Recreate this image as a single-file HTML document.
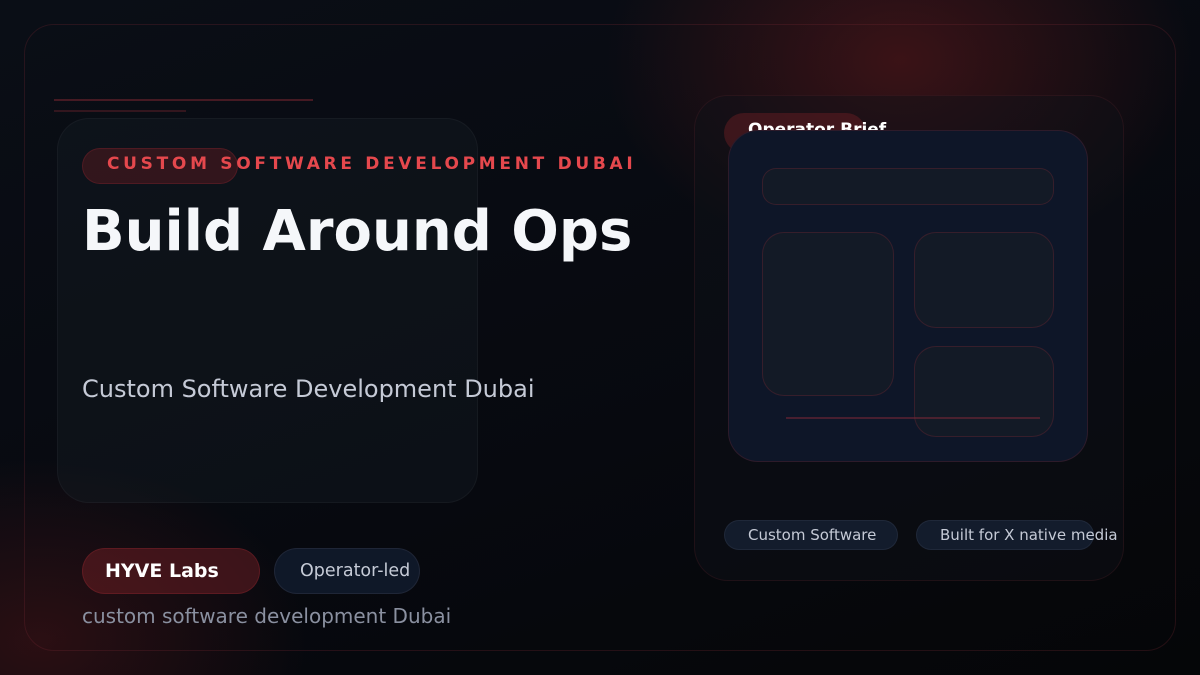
<!DOCTYPE html>
<html><head><meta charset="utf-8"><style>
*{margin:0;padding:0;box-sizing:border-box}
body{width:1200px;height:675px;overflow:hidden;font-family:"DejaVu Sans","Liberation Sans",sans-serif;
background:radial-gradient(ellipse 420px 300px at 900px 60px,rgba(120,28,28,.45),transparent 70%),
radial-gradient(ellipse 380px 260px at 40px 640px,rgba(110,26,26,.35),transparent 70%),
linear-gradient(160deg,#0a0e16 0%,#07090f 60%,#050608 100%);position:relative}
.a{position:absolute}
.frame{left:24px;top:24px;width:1152px;height:627px;border:1px solid rgba(120,40,50,.28);border-radius:30px}
.line{height:2px;background:rgba(110,35,45,.6)}
.lc{left:57px;top:118px;width:421px;height:385px;border-radius:32px;background:rgba(20,26,34,.45);border:1px solid rgba(255,255,255,.04)}
.pill1{left:82px;top:148px;width:156px;height:36px;border-radius:18px;background:rgba(120,30,35,.35);border:1px solid rgba(150,40,50,.3)}
.kick{left:107px;top:154px;font-size:17px;font-weight:bold;letter-spacing:3.7px;color:#e5484d;white-space:nowrap}
.title{left:82px;top:199px;font-size:56px;font-weight:bold;color:#f5f7fa;white-space:nowrap}
.sub{left:82px;top:375px;font-size:24px;color:#c5cad6;white-space:nowrap}
.rp{left:694px;top:95px;width:430px;height:486px;border-radius:34px;background:rgba(16,18,24,.45);border:1px solid rgba(120,40,50,.2)}
.ob{left:724px;top:113px;width:142px;height:40px;border-radius:20px;background:rgba(110,30,35,.45)}
.obt{left:748px;top:120px;font-size:17px;font-weight:bold;color:#fff;white-space:nowrap}
.ic{left:728px;top:130px;width:360px;height:332px;border-radius:30px;background:#0e1628;border:1px solid rgba(120,40,50,.3)}
.bx{border:1px solid rgba(120,40,55,.35);background:#131a26}
.chip{height:30px;border-radius:15px;background:#131c2c;border:1px solid rgba(60,70,90,.3);font-size:15px;color:#c5cad6;line-height:28px;white-space:nowrap}
.hy{left:82px;top:548px;width:178px;height:46px;border-radius:23px;background:rgba(110,30,35,.5);border:1px solid rgba(150,40,50,.35);color:#fff;font-weight:bold;font-size:19px;line-height:44px;padding-left:22px}
.op{left:274px;top:548px;width:146px;height:46px;border-radius:23px;background:#0f1828;border:1px solid rgba(80,80,100,.25);color:#c5cad6;font-size:17.5px;line-height:44px;padding-left:25px;white-space:nowrap}
.cap{left:82px;top:604px;font-size:20px;color:#8a90a0;white-space:nowrap}
</style></head><body>
<div class="a frame"></div>
<div class="a line" style="left:54px;top:99px;width:259px"></div>
<div class="a line" style="left:54px;top:110px;width:132px;opacity:.7"></div>
<div class="a lc"></div>
<div class="a pill1"></div>
<div class="a kick">CUSTOM SOFTWARE DEVELOPMENT DUBAI</div>
<div class="a title">Build Around Ops</div>
<div class="a sub">Custom Software Development Dubai</div>
<div class="a rp"></div>
<div class="a ob"></div>
<div class="a obt">Operator Brief</div>
<div class="a ic"></div>
<div class="a bx" style="left:762px;top:168px;width:292px;height:37px;border-radius:14px"></div>
<div class="a bx" style="left:762px;top:232px;width:132px;height:164px;border-radius:22px"></div>
<div class="a bx" style="left:914px;top:232px;width:140px;height:96px;border-radius:22px"></div>
<div class="a bx" style="left:914px;top:346px;width:140px;height:91px;border-radius:22px"></div>
<div class="a" style="left:786px;top:417px;width:254px;height:2px;background:rgba(120,40,55,.55)"></div>
<div class="a chip" style="left:724px;top:520px;width:174px;padding-left:23px">Custom Software</div>
<div class="a chip" style="left:916px;top:520px;width:178px;padding-left:23px;overflow:visible">Built for X native media</div>
<div class="a hy">HYVE Labs</div>
<div class="a op">Operator-led</div>
<div class="a cap">custom software development Dubai</div>
</body></html>
